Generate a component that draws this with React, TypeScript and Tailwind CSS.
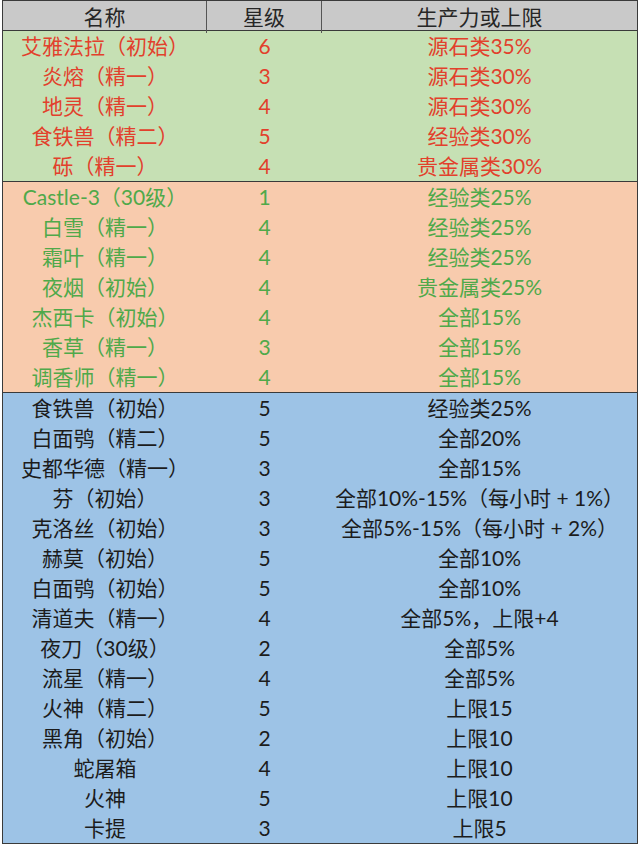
type Row = [string, string, string]

const groups: { bg: string; text: string; rows: Row[] }[] = [
  {
    bg: "bg-[#c6e0b4]",
    text: "text-[#e2402c]",
    rows: [
      ["艾雅法拉（初始）", "6", "源石类35%"],
      ["炎熔（精一）", "3", "源石类30%"],
      ["地灵（精一）", "4", "源石类30%"],
      ["食铁兽（精二）", "5", "经验类30%"],
      ["砾（精一）", "4", "贵金属类30%"],
    ],
  },
  {
    bg: "bg-[#f8cbad]",
    text: "text-[#4fa94a]",
    rows: [
      ["Castle-3（30级）", "1", "经验类25%"],
      ["白雪（精一）", "4", "经验类25%"],
      ["霜叶（精一）", "4", "经验类25%"],
      ["夜烟（初始）", "4", "贵金属类25%"],
      ["杰西卡（初始）", "4", "全部15%"],
      ["香草（精一）", "3", "全部15%"],
      ["调香师（精一）", "4", "全部15%"],
    ],
  },
  {
    bg: "bg-[#9dc3e6]",
    text: "text-[#1c1c1c]",
    rows: [
      ["食铁兽（初始）", "5", "经验类25%"],
      ["白面鸮（精二）", "5", "全部20%"],
      ["史都华德（精一）", "3", "全部15%"],
      ["芬（初始）", "3", "全部10%-15%（每小时 + 1%）"],
      ["克洛丝（初始）", "3", "全部5%-15%（每小时 + 2%）"],
      ["赫莫（初始）", "5", "全部10%"],
      ["白面鸮（初始）", "5", "全部10%"],
      ["清道夫（精一）", "4", "全部5%，上限+4"],
      ["夜刀（30级）", "2", "全部5%"],
      ["流星（精一）", "4", "全部5%"],
      ["火神（精二）", "5", "上限15"],
      ["黑角（初始）", "2", "上限10"],
      ["蛇屠箱", "4", "上限10"],
      ["火神", "5", "上限10"],
      ["卡提", "3", "上限5"],
    ],
  },
]

const cols = "grid grid-cols-[204px_115px_315px]"

export default function App() {
  return (
    <div className="w-[640px] h-[846px] bg-white font-['Lato','Noto_Sans_CJK_SC',sans-serif] text-[21px]">
      <div className="ml-[2px] w-[636px] border-l border-r border-b border-[#3a3a3a]">
        {/* header */}
        <div className={`${cols} h-[31px] bg-[#c9c9c9] text-[#262626] border-t border-b border-[#3a3a3a]`}>
          <div className="flex items-center justify-center border-r border-[#555]">名称</div>
          <div className="flex items-center justify-center border-r border-[#555]">星级</div>
          <div className="flex items-center justify-center">生产力或上限</div>
        </div>

        {groups.map((g, gi) => (
          <div
            key={gi}
            className={`${g.bg} ${g.text} ${gi < groups.length - 1 ? "border-b border-[#3a3a3a]" : ""}`}
          >
            {g.rows.map((r, ri) => (
              <div key={ri} className={`${cols} h-[30px] leading-[30px]`}>
                <div className="text-center whitespace-nowrap">{r[0]}</div>
                <div className="text-center">{r[1]}</div>
                <div className="text-center whitespace-nowrap">{r[2]}</div>
              </div>
            ))}
          </div>
        ))}
      </div>
    </div>
  )
}
